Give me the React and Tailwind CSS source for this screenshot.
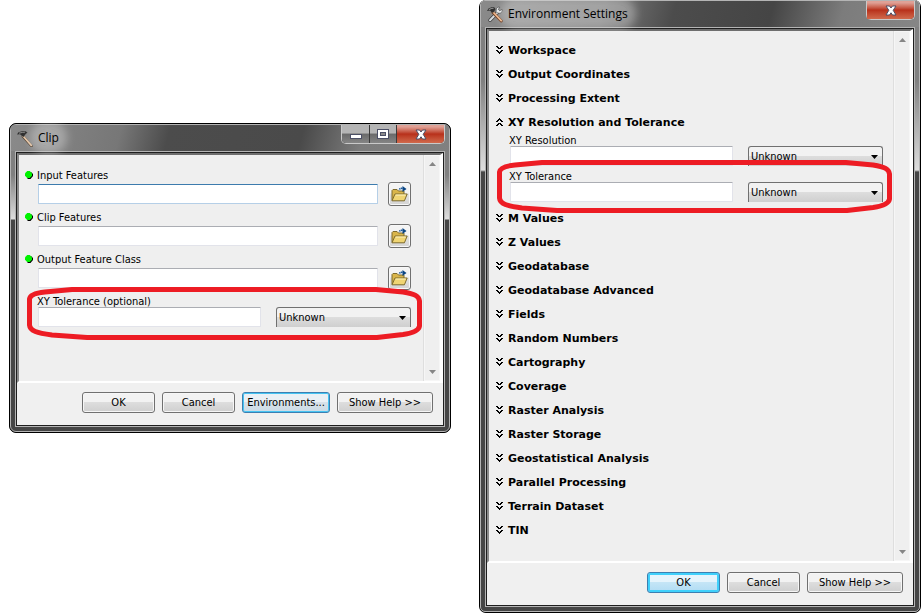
import React from 'react';
import clsx from 'clsx';

const sectionsBefore = ['Workspace', 'Output Coordinates', 'Processing Extent'];

const sectionsAfter = [
  'M Values',
  'Z Values',
  'Geodatabase',
  'Geodatabase Advanced',
  'Fields',
  'Random Numbers',
  'Cartography',
  'Coverage',
  'Raster Analysis',
  'Raster Storage',
  'Geostatistical Analysis',
  'Parallel Processing',
  'Terrain Dataset',
  'TIN',
];

const clipFields = [
  { id: 'input-features', label: 'Input Features', active: true },
  { id: 'clip-features', label: 'Clip Features' },
  { id: 'output-class', label: 'Output Feature Class' },
];

const HammerIcon = () => (
  <svg width="16" height="17" viewBox="0 0 16 17" aria-hidden="true">
    <path d="M6 6.5 14.5 16" stroke="#4b3a2a" strokeWidth="2.6" strokeLinecap="round" />
    <path d="M6 6 14.3 15.3" stroke="#e2c3a4" strokeWidth="1.8" strokeLinecap="round" />
    <path d="M0 4.6 1.5 2.2 5 1.2 8 1 10.5 2.6 8.5 4.3 6.5 7 4.5 5.6 3 4.2Z" fill="#2e2e2e" />
    <path d="M2 3.2 5.5 2.4 8 2.1" stroke="#9a9a9a" strokeWidth="0.9" fill="none" />
  </svg>
);

const ToolsIcon = () => (
  <svg width="16" height="17" viewBox="0 0 16 17" aria-hidden="true">
    <path d="M3 14.2 11.5 5.5" stroke="#3b3b3b" strokeWidth="3.4" strokeLinecap="round" />
    <path d="M3 14.2 11.5 5.5" stroke="#d5d9dc" strokeWidth="2" strokeLinecap="round" />
    <path d="M12.8 1.2 11.3 3.4 12.8 4.8 15 3.3 15.2 5.4 13.2 7.3 10.6 7.1 9 5.4 9.3 2.8 11 1.1Z" fill="#e6e9eb" stroke="#3b3b3b" strokeWidth="0.7" />
    <path d="M6 6.5 14.3 15" stroke="#6d3b1e" strokeWidth="3" strokeLinecap="round" />
    <path d="M6 6 14.1 14.5" stroke="#efb78b" strokeWidth="1.8" strokeLinecap="round" />
    <path d="M0 5 1.5 2.5 4.5 1.2 7 1 8.5 3 7.8 4.5 6 7 4.4 6 3 4.6Z" fill="#2e2e2e" />
    <path d="M1.8 3.6 4.8 2.4 6.6 2.2" stroke="#a8a8a8" strokeWidth="0.9" fill="none" />
  </svg>
);

const FolderIcon = () => (
  <svg width="17" height="16" viewBox="0 0 17 16" aria-hidden="true">
    <path d="M1 14.5V4.5L2 3.5H6L7.5 5H13V8" fill="#d9b54a" stroke="#7d6a2c" />
    <path d="M1 14.8 4 8H16.2L13.4 14.8Z" fill="#f0d573" stroke="#7d6a2c" />
    <path d="M4.6 9H14.7" stroke="#fff3c0" />
    <path d="M8.5 3.5C8.8 2.5 9.5 2.3 12 2.3" stroke="#1b5a9c" strokeWidth="1.6" fill="none" strokeDasharray="1.5 0.6" />
    <path d="M11.5 0 15.5 3 11.5 6Z" fill="#0b4583" />
  </svg>
);

const DoubleChevron = ({ up }) => (
  <svg width="7" height="8" viewBox="0 0 7 8" shapeRendering="crispEdges" className={clsx(up && 'rotate-180')} aria-hidden="true">
    <path d="M0 0h2v1h1v1h1v-1h1v-1h2v1h-1v1h-1v1h-3v-1h-1v-1h-1z" />
    <path d="M0 4h2v1h1v1h1v-1h1v-1h2v1h-1v1h-1v1h-1v1h-1v-1h-1v-1h-1v-1h-1z" />
  </svg>
);

const CaptionClose = () => (
  <button
    type="button"
    aria-label="Close"
    className="flex h-[18px] w-[47px] items-center justify-center rounded-br bg-linear-to-b from-[#dfa095] from-10% via-[#b8301a] via-50% to-[#d0694c]"
  >
    <svg width="12" height="11" viewBox="0 0 12 11" aria-hidden="true">
      <path d="M1 1H4.5L6 3 7.5 1H11L8.2 5.3 11 10H7.5L6 7.8 4.5 10H1L3.8 5.3Z" fill="#fff" stroke="#4b4f66" />
    </svg>
  </button>
);

const CaptionButtons = ({ closeOnly }) => (
  <div className="flex self-start rounded-b-[5px] border border-t-0 border-[#c9c9c9] bg-[#2b2b2b]">
    {!closeOnly && (
      <>
        <button type="button" aria-label="Minimize" className="flex h-[18px] w-7 items-center justify-center rounded-bl border-r border-[#3a3a3a] bg-linear-to-b from-[#b5b5b5] from-45% via-[#6a6a6a] via-50% to-[#858585]">
          <svg width="12" height="5" viewBox="0 0 12 5" className="mt-1" aria-hidden="true">
            <rect x="0.5" y="0.5" width="11" height="4" fill="#fff" stroke="#4b4f66" />
          </svg>
        </button>
        <button type="button" aria-label="Maximize" className="flex h-[18px] w-[27px] items-center justify-center border-r border-[#3a3a3a] bg-linear-to-b from-[#b5b5b5] from-45% via-[#6a6a6a] via-50% to-[#858585]">
          <svg width="12" height="10" viewBox="0 0 12 10" aria-hidden="true">
            <rect x="0.5" y="0.5" width="11" height="9" fill="#fff" stroke="#4b4f66" />
            <rect x="3.5" y="3.5" width="5" height="3" fill="#8a8a8a" stroke="#4b4f66" />
          </svg>
        </button>
      </>
    )}
    <CaptionClose />
  </div>
);

const PushButton = ({ children, width, active, glow }) => (
  <button
    type="button"
    className={clsx(
      'h-[21px] rounded-[3px] border pt-px text-center leading-[18px] whitespace-nowrap',
      width,
      !active && 'border-[#707070] bg-linear-to-b from-[#f2f2f2] from-45% via-[#dddddd] via-50% to-[#cfcfcf] inset-ring inset-ring-[#f6f6f6]',
      active && !glow && 'border-[#3c7fb1] bg-linear-to-b from-[#eaf0f5] from-45% via-[#d7e1e9] via-50% to-[#cbdbe6] inset-ring inset-ring-[#46c4f2]',
      active && glow && 'border-[#3c7fb1] bg-linear-to-b from-[#e5f4fc] from-45% via-[#c4e5f6] via-50% to-[#b0dcf4] inset-ring-2 inset-ring-[#3fd0fb]'
    )}
  >
    {children}
  </button>
);

const TextBox = ({ id, active }) => (
  <input
    id={id}
    type="text"
    className={clsx(
      'h-5 min-w-0 flex-1 rounded-[1px] border bg-white px-1 outline-none',
      active
        ? 'border-[#b5cfe7] border-t-[#3d7bad]'
        : 'border-[#e2e3ea] border-t-[#abadb3]'
    )}
  />
);

const UnitSelect = ({ label }) => (
  <div className="relative w-[135px] shrink-0">
    <select
      aria-label={label}
      className="block h-5 w-full appearance-none rounded-t-[3px] border border-b-0 border-[#707070] bg-linear-to-b from-[#f2f2f2] from-45% via-[#dddddd] via-50% to-[#cfcfcf] pt-0.5 pl-0.5 outline-none"
    >
      <option>Unknown</option>
    </select>
    <svg width="7" height="4" viewBox="0 0 7 4" className="pointer-events-none absolute top-[9px] right-[5px]" aria-hidden="true">
      <path d="M0 0H7L3.5 4Z" />
    </svg>
  </div>
);

// hand-drawn marker ring round the tolerance row
const Marker = ({ className }) => (
  <svg
    viewBox="0 0 395 53"
    preserveAspectRatio="none"
    className={clsx('pointer-events-none absolute z-10 h-[53px]', className)}
    aria-hidden="true"
  >
    <path
      d="M2.5 12C3 8 8 6 18 5L45 2.5H349L376 5C388 7 392 9 392.5 14V39C392 43 386 46 376 47.5L350 50.5H60L25 48C10 46 3 44 2.5 38Z"
      fill="none"
      stroke="#ed1c24"
      strokeWidth="5"
      strokeLinejoin="round"
    />
  </svg>
);

const ToleranceField = ({ id, label, marker }) => (
  <div className="relative">
    <label htmlFor={id} className="-ml-px block pt-0.5 leading-[11px]">{label}</label>
    <div className="flex gap-[15px]">
      <TextBox id={id} />
      <UnitSelect label={`${label} unit`} />
    </div>
    {marker && <Marker className={marker} />}
  </div>
);

const ScrollBar = () => (
  <div className="flex w-[17px] shrink-0 flex-col items-center justify-between border-l border-[#dedede] bg-[#efefef] py-[7px] inset-ring inset-ring-[#f6f6f6]">
    <svg width="7" height="4" viewBox="0 0 7 4" aria-hidden="true">
      <path d="M0 4H7L3.5 0Z" fill="#868686" />
    </svg>
    <svg width="7" height="4" viewBox="0 0 7 4" aria-hidden="true">
      <path d="M0 0H7L3.5 4Z" fill="#868686" />
    </svg>
  </div>
);

const Dialog = ({ title, icon, frame, caption, closeOnly, className, children, footer }) => (
  <section
    aria-label={title}
    className={clsx('min-w-0 flex-1 border border-black bg-black', className)}
  >
    <div className={clsx('border border-[#b4b4b4] px-1 pb-1', closeOnly ? 'rounded-[5px]' : 'rounded-[6px]', frame)}>
      <header className={clsx('-mx-1 flex h-[26px] items-center rounded-t pr-1 pl-1.5', caption)}>
        {icon}
        <h1 className="ml-[5px] flex-1 font-['Open_Sans',sans-serif] text-[12px] leading-4 text-black">
          <span className="rounded-full bg-white/30 shadow-[0_0_8px_8px_rgba(255,255,255,0.3)]">{title}</span>
        </h1>
        <CaptionButtons closeOnly={closeOnly} />
      </header>
      <div className="border border-[#b4b4b4]">
        <div className="border border-[#1e1e1e] bg-[#f0f0f0]">
          <div className="flex border-t-2 border-r-[3px] border-b-2 border-l-2 border-t-[#6e6e6e] border-r-white border-b-white border-l-[#8a8a8a] bg-[#efefef]">
            {children}
            <ScrollBar />
          </div>
          <footer className="flex justify-end gap-[7px] px-2.5 pt-[9px] pb-3">{footer}</footer>
        </div>
      </div>
    </div>
  </section>
);

const SectionRow = ({ title, open }) => (
  <button type="button" aria-expanded={!!open} className="flex h-6 items-center gap-[5px] pt-px font-['DejaVu_Sans',Verdana,sans-serif] text-[11px] font-bold">
    <DoubleChevron up={open} />
    <span className="pt-0.5 leading-5">{title}</span>
  </button>
);

const ClipDialog = () => (
  <Dialog
    title="Clip"
    icon={<HammerIcon />}
    className="mt-[123px] rounded-[7px]"
    frame="bg-[linear-gradient(to_bottom,#808080_0,#808080_50px,#dedede_94px,#464646_95px,#464646_100%)]"
    caption="bg-[linear-gradient(105deg,#8a8a8a_0%,#777777_25%,#4c4c4c_36%,#4a4a4a_66%,#7c7c7c_80%,#808080_100%)]"
    footer={
      <>
        <PushButton width="w-[73px]">OK</PushButton>
        <PushButton width="w-[73px]">Cancel</PushButton>
        <PushButton width="w-[88px]" active>Environments...</PushButton>
        <PushButton width="w-[96px]">Show Help &gt;&gt;</PushButton>
      </>
    }
  >
    <div className="min-w-0 flex-1 pt-[13px] pr-3 pb-[54px] pl-[19px]">
      {clipFields.map((field) => (
        <div key={field.id} className="mb-1">
          <div className="-ml-[13px] flex items-center gap-1">
            <svg width="8" height="8" viewBox="0 0 8 8" aria-hidden="true">
              <path d="M3 1H6L8 3V5L5.5 8H3L2 7Z" fill="#000" />
              <path d="M2.2 0H4.8L7 2.2V4.8L4.8 7H2.2L0 4.8V2.2Z" fill="#00f200" />
            </svg>
            <label htmlFor={field.id} className="pt-0.5 leading-3">{field.label}</label>
          </div>
          <div className="flex items-center gap-2.5">
            <TextBox id={field.id} active={field.active} />
            <button
              type="button"
              aria-label={`Browse ${field.label}`}
              className="flex h-6 w-[23px] items-center justify-center rounded-[3px] border border-[#707070] bg-linear-to-b from-[#f4f4f4] from-45% via-[#e2e2e2] via-50% to-[#d4d4d4] inset-ring inset-ring-[#f8f8f8]"
            >
              <FolderIcon />
            </button>
          </div>
        </div>
      ))}
      <ToleranceField
        id="clip-tolerance"
        label="XY Tolerance (optional)"
        marker="top-[-7px] -left-[11px] w-[calc(100%+22px)]"
      />
    </div>
  </Dialog>
);

const EnvironmentDialog = () => (
  <Dialog
    title="Environment Settings"
    icon={<ToolsIcon />}
    closeOnly
    className="rounded-[7px] border-t-0"
    frame="bg-[linear-gradient(to_bottom,#808080_0,#808080_80px,#dedede_169px,#464646_171px,#464646_100%)]"
    caption="bg-[linear-gradient(105deg,#8a8a8a_0%,#7a7a7a_28%,#4c4c4c_44%,#454545_66%,#7c7c7c_82%,#868686_100%)]"
    footer={
      <>
        <PushButton width="w-[73px]" active glow>OK</PushButton>
        <PushButton width="w-[73px]">Cancel</PushButton>
        <PushButton width="w-[96px]">Show Help &gt;&gt;</PushButton>
      </>
    }
  >
    <div className="min-w-0 flex-1 pt-1.5 pr-2.5 pb-5 pl-[7px]">
      {sectionsBefore.map((title) => (
        <SectionRow key={title} title={title} />
      ))}
      <SectionRow title="XY Resolution and Tolerance" open />
      <div className="flex flex-col gap-[3px] pb-[3px] pl-3.5">
        <ToleranceField id="env-resolution" label="XY Resolution" />
        <ToleranceField
          id="env-tolerance"
          label="XY Tolerance"
          marker="top-[-9px] -left-[13px] w-[calc(100%+22px)]"
        />
      </div>
      {sectionsAfter.map((title) => (
        <SectionRow key={title} title={title} />
      ))}
    </div>
  </Dialog>
);

const App = () => (
  <main className="flex items-start gap-7 bg-white pr-px pl-[9px] font-['DejaVu_Sans_Condensed',Tahoma,'DejaVu_Sans',sans-serif] text-[11px] text-black">
    <ClipDialog />
    <EnvironmentDialog />
  </main>
);

export default App;
